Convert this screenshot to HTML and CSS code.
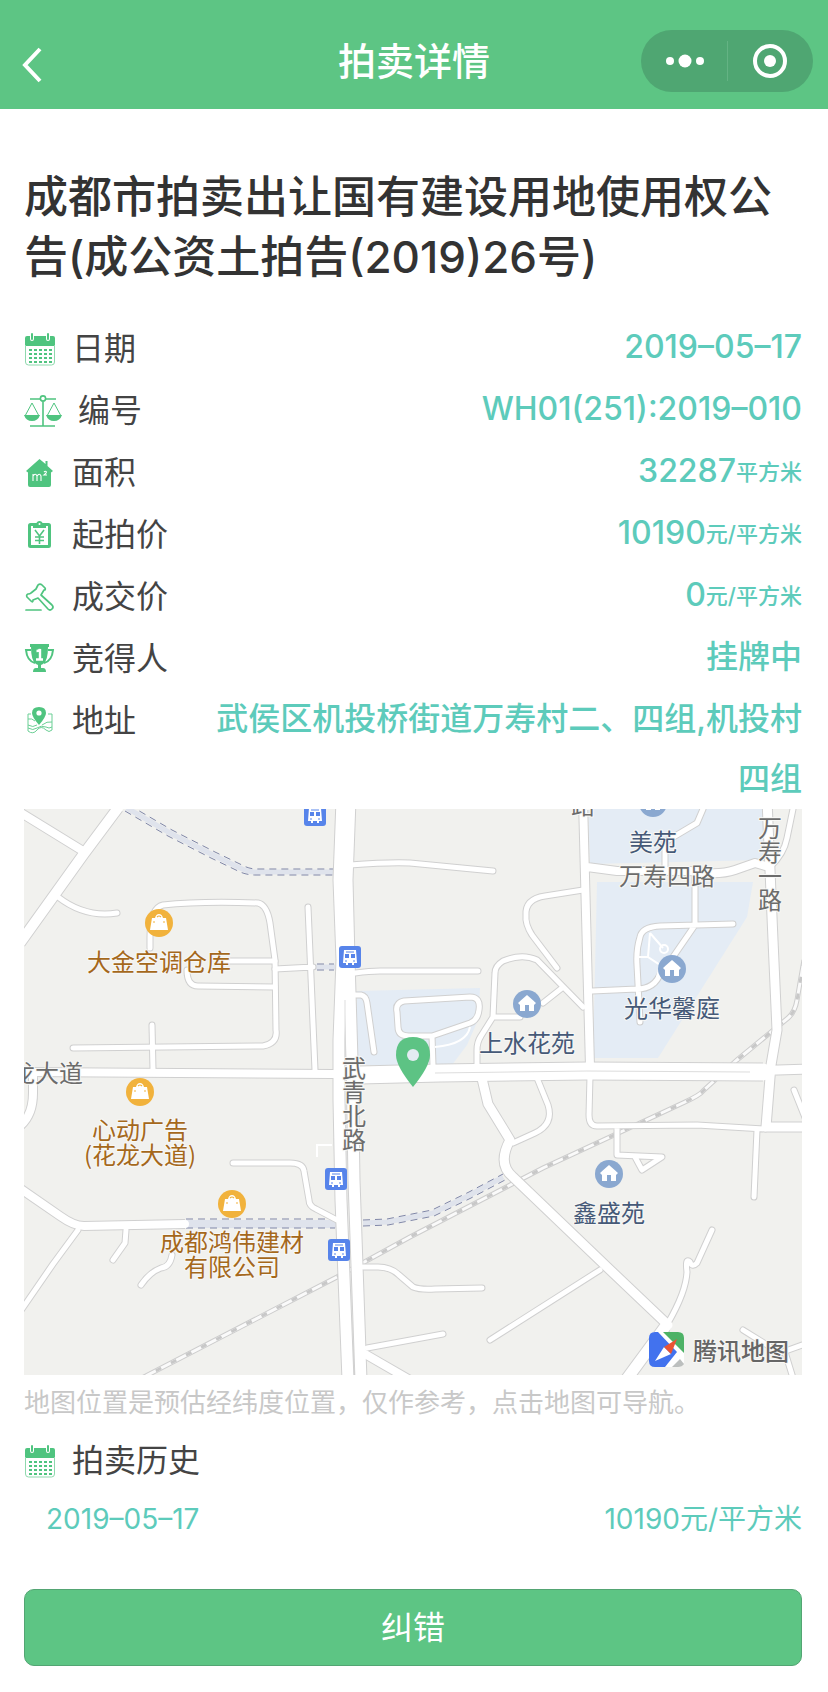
FILE: index.html
```html
<!DOCTYPE html>
<html lang="zh-CN">
<head>
<meta charset="utf-8">
<meta name="viewport" content="width=device-width, initial-scale=1">
<title>拍卖详情</title>
<link rel="stylesheet" href="styles.css">
</head>
<body>
<svg class="defs" aria-hidden="true">
  <defs>
    <symbol id="calendar" viewBox="0 0 32 34">
      <path fill="#4fc47f" d="M1 14V6q0-2 2-2h3v3q0 2 2 2t2-2V4h12v3q0 2 2 2t2-2V4h3q2 0 2 2v8z"/>
      <path fill="none" stroke="#4fc47f" stroke-width="2" stroke-linecap="round" d="M8 2v5M24 2v5"/>
      <path fill="none" stroke="#8fd9ae" d="M1.500 13v17q0 3 3 3h23q3 0 3-3V13"/>
      <path fill="none" stroke="#4fc47f" stroke-width="2" stroke-dasharray="3 2" d="M5 18h23M5 22h23M5 26h23M5 30h23"/>
    </symbol>
    <symbol id="scales" viewBox="0 0 38 34">
      <g fill="none" stroke="#4fc47f" stroke-width="1.600">
        <path d="M6 5h10M22 5h10M19 8v24M6 32h25"/>
        <circle cx="19" cy="4.500" r="2.600"/>
        <path stroke-width="1" d="M1 22 8 9l7 13M23 22l7-13 7 13"/>
      </g>
      <path fill="#4fc47f" d="M0 21h16q-2 6-8 6t-8-6zM22 21h16q-2 6-8 6t-8-6z"/>
    </symbol>
    <symbol id="house" viewBox="0 0 32 32">
      <path fill="#4fc47f" d="M2 14 15.500 2l6 5V4h2v5l5.500 5-2 1.500V28q0 2-2 2H6q-2 0-2-2V15.500z"/>
      <path fill="none" stroke="#fff" stroke-width="1.100" d="M9 24v-7M9 19q2.500-3.500 4 0v5M13 19q2.500-3.500 4 0v5M20 15q1.500-1.500 2.500 0 0 1-2.500 3h3"/>
    </symbol>
    <symbol id="clipboard" viewBox="0 0 32 32">
      <rect x="5.500" y="5.500" width="20" height="22" rx="1" fill="none" stroke="#4fc47f" stroke-width="3"/>
      <path fill="#4fc47f" d="M9 5h3q1-3 3.500-3T19 5h3v4H9z"/>
      <circle cx="15.500" cy="5" r="1" fill="#fff"/>
      <path fill="none" stroke="#4fc47f" stroke-width="1.600" d="m11 11 4.500 6 4.500-6M15.500 17v8M11 18h9M11 21.500h9"/>
    </symbol>
    <symbol id="gavel" viewBox="0 0 32 32">
      <path fill="none" stroke="#4fc47f" stroke-width="1.700" stroke-linejoin="round" stroke-linecap="round" d="M14 4q2-2 4 0l3 3q1 2-1 2l-3 5 11 10q2 2 0 4t-4 0L14 17l-5 2q0 3-2 1l-4-4q-1-2 1-3 2 0 3-1l5-4q1-2 2-4zM2 29h15"/>
    </symbol>
    <symbol id="trophy" viewBox="0 0 32 32">
      <path fill="#4fc47f" d="M6 1h19v3h-1q0 14-5 17l-2 1v3h2q3 0 3 4H9q0-4 3-4h2v-3l-2-1Q7 18 7 4H6z"/>
      <path fill="none" stroke="#4fc47f" stroke-width="2" d="M7 7H2q1 11 9 13M24 7h5q-1 11-9 13"/>
      <path fill="none" stroke="#fff" stroke-width="2.400" d="M12.500 8q3 0 3.500-2v10M12 16.500h7"/>
    </symbol>
    <symbol id="address" viewBox="0 0 32 32">
      <path fill="#4fc47f" d="M15 20Q8 12 8 8q0-6 7-6t7 6q0 4-7 12z"/>
      <circle cx="15" cy="8" r="2.600" fill="#fff"/>
      <path fill="none" stroke="#6bcf95" stroke-width="1" d="M7 9H4v17q5 4 9-1t9 0q3 3 6 0V9h-4M4 14q4-1 7 2M4 20q5 3 9 0M18 20q5-4 10-3M4 23q5 3 9 0t9-1q3 2 6 0"/>
    </symbol>
  </defs>
</svg>

<header class="navbar">
  <button class="back" type="button" aria-label="返回">
    <svg viewBox="0 0 24 40"><path d="M21 4 6 20l15 16"/></svg>
  </button>
  <div class="navbar-title">拍卖详情</div>
  <div class="capsule">
    <button type="button" aria-label="更多">
      <svg viewBox="0 0 40 40"><circle cx="6" cy="20" r="4"/><circle cx="21" cy="20" r="6.500"/><circle cx="36" cy="20" r="4"/></svg>
    </button>
    <button type="button" aria-label="关闭">
      <svg viewBox="0 0 40 40"><circle cx="20" cy="20" r="6"/><circle class="ring" cx="20" cy="20" r="15"/></svg>
    </button>
  </div>
</header>

<main class="page">
  <h1 class="title">成都市拍卖出让国有建设用地使用权公告(成公资土拍告(2019)26号)</h1>

  <dl class="facts">
    <div class="fact"><dt><svg class="icon icon-tall"><use href="#calendar"/></svg>日期</dt><dd>2019–05–17</dd></div>
    <div class="fact"><dt><svg class="icon icon-wide"><use href="#scales"/></svg>编号</dt><dd>WH01(251):2019–010</dd></div>
    <div class="fact"><dt><svg class="icon"><use href="#house"/></svg>面积</dt><dd>32287<small>平方米</small></dd></div>
    <div class="fact"><dt><svg class="icon"><use href="#clipboard"/></svg>起拍价</dt><dd>10190<small>元/平方米</small></dd></div>
    <div class="fact"><dt><svg class="icon"><use href="#gavel"/></svg>成交价</dt><dd>0<small>元/平方米</small></dd></div>
    <div class="fact"><dt><svg class="icon"><use href="#trophy"/></svg>竞得人</dt><dd>挂牌中</dd></div>
    <div class="fact"><dt><svg class="icon"><use href="#address"/></svg>地址</dt><dd>武侯区机投桥街道万寿村二、四组,机投村四组</dd></div>
  </dl>

  <a class="map" href="#map" id="map" aria-label="地图导航">
    <svg viewBox="24 809 778 566">
      <defs>
        <g id="small-roads">
          <path d="M58 897Q85 918 117 913"/>
          <path d="M150 948V937Q150 908 163 905 200 901 258 903 267 905 270 923L275 960 276 1030Q278 1043 263 1046L73 1048"/>
          <path d="M225 961H275M187 970Q187 986 198 986L275 987M275 969 313 967M308 907 315 1070M152 1025 153 1070"/>
          <path d="M350 865Q390 862 410 863L493 871M355 973Q370 971 380 971H478"/>
          <path d="M355 995H361Q366 996 367 1003L374 1052"/>
          <path d="M398 1027Q398 1036 409 1036H432L470 1023Q478 1020 479 1010 481 997 470 997L404 1001Q395 1003 397 1012ZM432 1036 433 1065"/>
          <path d="M477 1065V1050Q477 1042 481 1036L493 1017 495 973Q495 966 503 961 522 953 537 960L583 1007M493 1017H520M543 1003 562 988"/>
          <path d="M583 890 545 896Q525 899 526 915 525 924 532 935L557 968"/>
          <path d="M703 809 697 823 665 842V870M695 878V925M733 924 660 926Q642 927 640 937 636 950 637 965L640 1022M695 925 673 957M592 991 637 989Q655 989 661 972"/>
          <path d="M793 809 787 838Q784 854 770 867"/>
          <path d="M590 1076 589 1115Q589 1126 597 1126L697 1125 765 1129M617 1127V1155L662 1157 642 1170 635 1157M757 1130 754 1197"/>
          <path d="M535 1073 548 1105Q554 1124 535 1133L513 1143"/>
          <path d="M794 1090 810 1130"/>
          <path d="M712 1230 697 1263Q692 1268 690 1262 685 1257 687 1272 686 1292 668 1323M600 1270 490 1340M743 1330 780 1353 802 1345M785 1352 793 1378"/>
          <path d="M363 1267H378Q391 1267 399 1275L413 1287Q420 1290 435 1289L482 1288M367 1348 443 1334"/>
          <path d="M78 1230 53 1264 20 1312M126 1230 125 1243 113 1260M172 1255Q170 1267 161 1268 150 1272 141 1285"/>
          <path d="M233 1163H290Q303 1163 304 1171L309 1200Q309 1206 316 1209L337 1220"/>
        </g>
        <g id="big-roads">
          <path d="M18 811 83 851M33 1072V1093Q33 1115 20 1126M18 1187 60 1216Q74 1226 84 1226L185 1224"/>
          <path d="M118 808 83 855 20 943" stroke-width="10"/>
          <path d="M20 1072 333 1074"/>
          <path d="M583 800 590 1067M587 867 617 871H690Q718 876 735 870L755 863 769 867"/>
          <path d="M767 800 773 940 777 1030 771 1065 766 1127H808" stroke-width="9"/>
          <path d="M480 1070 488 1104 510 1140Q497 1164 513 1177L607 1267 668 1325" stroke-width="9"/>
          <path d="M626 1380 665 1327" stroke-width="11"/>
          <path d="M365 1354 410 1380"/>
          <path d="M360 1075 440 1073 587 1071 763 1072" stroke-width="17"/>
          <path d="M750 1071 810 1069" stroke-width="9"/>
          <path d="M350 800 347 880 349 960 352 1060 354 1180 361 1380" stroke-width="11"/>
          <path d="M342 800 339 880 342 960 339 1040 339 1100 341 1200 348 1380" stroke-width="11"/>
        </g>
        <g id="poi-shop">
          <circle r="14" fill="#f1b23c"/>
          <path fill="#fff" d="M-7-5h3Q-3-9 0-9t4 4h3L9 7H-9z"/>
          <path fill="none" stroke="#f1b23c" stroke-width="1.200" d="M-2-6Q0-8 2-6M-6-1h2M4-1h2"/>
        </g>
        <g id="poi-home">
          <circle r="14" fill="#8aa8d0"/>
          <path fill="#fff" d="M-9-1Q-8-2 0-9 8-2 9-1L7 1v6H2V1h-4v6h-5V1z"/>
        </g>
        <g id="poi-bus">
          <rect x="-11" y="-11" width="22" height="22" rx="3" fill="#5784ea"/>
          <path fill="#fff" d="M-6-7H6l1 13H4v2H2V6h-4v2h-2V6h-3z"/>
          <path fill="none" stroke="#5784ea" stroke-width="4" d="M-5-1h4M1-1h4"/>
          <path fill="none" stroke="#5784ea" stroke-width="1" d="M-4-5h8M-5 4h2M3 4h2"/>
        </g>
      </defs>

      <rect x="24" y="809" width="778" height="566" fill="#f1f1ee"/>
      <path class="estate" d="M357 991 480 988 478 1020 467 1045 452 1065H357zM588 805H763V860L590 864zM597 882H753L747 917 658 1058H593z"/>

      <g class="tunnel">
        <path d="M127 808 170 833 213 855 240 868Q248 872 256 872H333"/>
        <path d="M315 967H335M363 1223 387 1222 433 1213 470 1195 503 1177"/>
        <path class="tunnel-wide" d="M185 1224H337"/>
      </g>
      <g class="tunnel-edge">
        <path d="M129 805 172 830 215 852 242 865Q249 869 257 869H333M125 811 168 836 211 858 238 871Q246 875 255 875H333"/>
        <path d="M317 964H334M317 970H334M186 1219H335M186 1228H335"/>
        <path d="M363 1220 387 1219 432 1210 469 1192 503 1174M363 1226 388 1225 434 1216 471 1198 505 1180"/>
      </g>

      <path class="rail-edge" d="M804 960 797 1000Q795 1012 788 1018L737 1060 703 1091Q700 1095 685 1102L640 1123 543 1168 410 1237 337 1277 140 1379"/>
      <path class="rail-base" d="M804 960 797 1000Q795 1012 788 1018L737 1060 703 1091Q700 1095 685 1102L640 1123 543 1168 410 1237 337 1277 140 1379"/>
      <path class="rail-dash" d="M804 960 797 1000Q795 1012 788 1018L737 1060 703 1091Q700 1095 685 1102L640 1123 543 1168 410 1237 337 1277 140 1379"/>

      <g class="casing">
        <use href="#small-roads"/>
        <g class="wide-casing">
          <path d="M18 811 83 851M33 1072V1093Q33 1115 20 1126M18 1187 60 1216Q74 1226 84 1226L185 1224M20 1072 333 1074M583 800 590 1067M587 867 617 871H690Q718 876 735 870L755 863 769 867M365 1354 410 1380"/>
          <path stroke-width="12" d="M118 808 83 855 20 943"/>
          <path stroke-width="11" d="M767 800 773 940 777 1030 771 1065 766 1127H808M480 1070 488 1104 510 1140Q497 1164 513 1177L607 1267 668 1325M750 1071 810 1069"/>
          <path stroke-width="13" d="M626 1380 665 1327M350 800 347 880 349 960 352 1060 354 1180 361 1380M342 800 339 880 342 960 339 1040 339 1100 341 1200 348 1380"/>
          <path stroke-width="19" d="M360 1075 440 1073 587 1071 763 1072"/>
        </g>
      </g>
      <g class="surface">
        <use href="#small-roads"/>
        <g class="wide-surface"><use href="#big-roads"/></g>
      </g>
      <path class="footpath" d="M650 933 648 957 660 965 655 985M637 957H648M650 933 663 948M470 1027Q467 1044 435 1047M317 1157V1145H332"/>
      <circle class="footpath" cx="664" cy="949" r="4"/>
      <path class="divider" d="M345 1000 345 1080 347 1180M435 1073 587 1071 750 1072"/>

      <use href="#poi-shop" x="159" y="923"/>
      <use href="#poi-shop" x="140" y="1092"/>
      <use href="#poi-shop" x="232" y="1204"/>
      <use href="#poi-home" x="653" y="803"/>
      <use href="#poi-home" x="672" y="969"/>
      <use href="#poi-home" x="527" y="1004"/>
      <use href="#poi-home" x="609" y="1174"/>
      <use href="#poi-bus" x="315" y="815"/>
      <use href="#poi-bus" x="350" y="957"/>
      <use href="#poi-bus" x="336" y="1179"/>
      <use href="#poi-bus" x="339" y="1250"/>

      <g class="label label-shop">
        <text x="159" y="971">大金空调仓库</text>
        <text x="140" y="1139">心动广告</text>
        <text x="140" y="1164">(花龙大道)</text>
        <text x="232" y="1251">成都鸿伟建材</text>
        <text x="232" y="1276">有限公司</text>
      </g>
      <g class="label label-home">
        <text x="653" y="851">美苑</text>
        <text x="672" y="1017">光华馨庭</text>
        <text x="527" y="1052">上水花苑</text>
        <text x="609" y="1222">鑫盛苑</text>
      </g>
      <g class="label label-road">
        <text x="47" y="1082">龙大道</text>
        <text x="583" y="814">路</text>
        <text x="667" y="885">万寿四路</text>
        <text class="label-vertical" x="354" y="1104">武青北路</text>
        <text class="label-vertical" x="770" y="864">万寿一路</text>
      </g>

      <path fill="#5dc384" d="M413 1087Q396 1066 396 1055 396 1037 413 1037T430 1055Q430 1066 413 1087z"/>
      <circle cx="413" cy="1055" r="6" fill="#e4ebf2"/>

      <g transform="translate(649 1332)">
        <rect width="35" height="35" rx="6" fill="#fff"/>
        <path fill="#4272ee" d="M6 0h3l19 20-12 15H6q-6 0-6-6V6q0-6 6-6z"/>
        <path fill="#4db266" d="M14 0h15q6 0 6 6v15z"/>
        <path fill="#bcbfbe" d="M23 35 31 27l4 5q-2 3-6 3z"/>
        <path fill="#fff" d="M6 29 15 15l7 7z"/>
        <path fill="#ea5433" d="M28 7 15 15l7 7z"/>
      </g>
      <text class="label brand" x="741" y="1360">腾讯地图</text>
    </svg>
  </a>
  <p class="map-note">地图位置是预估经纬度位置，仅作参考，点击地图可导航。</p>

  <section class="history">
    <h2 class="history-title"><svg class="icon icon-tall"><use href="#calendar"/></svg>拍卖历史</h2>
    <ul class="history-list">
      <li><time datetime="2019-05-17">2019–05–17</time><span>10190元/平方米</span></li>
    </ul>
  </section>

  <button class="report" type="button">纠错</button>
</main>
</body>
</html>
```

FILE: styles.css
```css
* {
  box-sizing: border-box;
}

body {
  margin: 0;
  background: #fff;
  color: #444;
  font-family: Inter, "Noto Sans CJK SC", sans-serif;
  font-size: 32px;
}

button {
  padding: 0;
  border: 0;
  background: none;
  color: inherit;
  font: inherit;
}

.defs {
  position: absolute;
  width: 0;
  height: 0;
}

/* Navigation bar */
.navbar {
  display: grid;
  grid-template-columns: 1fr auto 1fr;
  align-items: center;
  height: 109px;
  padding: 12px 15px 0;
  background: #5dc584;
  color: #fff;
}

.navbar-title {
  font-size: 38px;
  font-weight: 500;
  line-height: 60px;
}

.back {
  width: 32px;
  height: 40px;
  margin-top: 8px;
  padding-left: 4px;
}

.back svg {
  display: block;
  width: 24px;
  height: 40px;
  fill: none;
  stroke: #fff;
  stroke-width: 4;
}

.capsule {
  display: flex;
  align-items: center;
  justify-self: end;
  width: 172px;
  height: 62px;
  border-radius: 31px;
  background: #4fa672;
}

.capsule button {
  display: flex;
  flex: 1;
  justify-content: center;
}

.capsule button + button {
  border-left: 1px solid #64b384;
}

.capsule svg {
  width: 40px;
  height: 40px;
  fill: #fff;
}

.capsule .ring {
  fill: none;
  stroke: #fff;
  stroke-width: 4;
}

/* Content */
.page {
  padding: 58px 26px 27px 24px;
}

.title {
  margin: 0 0 30px;
  color: #333;
  font-size: 44px;
  font-weight: 500;
  line-height: 60px;
}

.facts {
  margin: 0;
}

.fact {
  display: flex;
  justify-content: space-between;
  gap: 64px;
  line-height: 60px;
}

.fact:not(:last-child) {
  padding-bottom: 2px;
}

.fact dt {
  display: flex;
  flex: none;
  align-items: center;
  gap: 16px;
  height: 60px;
  padding-top: 4px;
}

.fact dd {
  margin: 0;
  color: #5dcbbb;
  font-weight: 500;
  text-align: right;
}

.fact small {
  font-size: 22px;
  line-height: 1;
  vertical-align: 2px;
}

.icon {
  flex: none;
  width: 32px;
  height: 32px;
}

.icon-tall {
  height: 34px;
}

.icon-wide {
  width: 38px;
  height: 34px;
}

/* Map */
.map {
  display: block;
  overflow: hidden;
}

.map svg {
  display: block;
  width: 100%;
}

.estate {
  fill: #e4ecf5;
}

.tunnel,
.tunnel-edge,
.casing,
.surface,
.footpath,
.divider,
.rail-edge,
.rail-base,
.rail-dash {
  fill: none;
}

.tunnel {
  stroke: #dfe3ec;
  stroke-width: 5;
}

.tunnel-wide {
  stroke-width: 8;
}

.tunnel-edge {
  stroke: #8087a8;
  stroke-width: 1;
  stroke-dasharray: 7 5;
}

.rail-edge {
  stroke: #cdcdcd;
  stroke-width: 5;
}

.rail-base {
  stroke: #fafafa;
  stroke-width: 3;
}

.rail-dash {
  stroke: #c8c8c8;
  stroke-width: 3;
  stroke-dasharray: 6 11;
}

.footpath {
  stroke: #fff;
  stroke-width: 2;
}

.casing {
  stroke: #d0d0d0;
  stroke-width: 7;
  stroke-linecap: round;
  stroke-linejoin: round;
}

.wide-casing {
  stroke-width: 10;
  stroke-linecap: butt;
}

.surface {
  stroke: #fff;
  stroke-width: 5;
  stroke-linecap: round;
  stroke-linejoin: round;
}

.wide-surface {
  stroke-width: 8;
}

.divider {
  stroke: #ddd;
  stroke-width: 1;
}

.label {
  font-family: "Noto Sans CJK SC", sans-serif;
  font-size: 24px;
  text-anchor: middle;
  stroke: #f8f8f6;
  stroke-width: 2;
  stroke-linejoin: round;
  paint-order: stroke;
}

.label-vertical {
  writing-mode: vertical-rl;
}

.label-shop {
  fill: #a5681c;
}

.label-home {
  fill: #465a78;
}

.label-road {
  fill: #6c6c6c;
}

.brand {
  fill: #666;
  font-weight: 500;
}

.map-note {
  margin: 8px 0 0;
  color: #c8c8c8;
  font-size: 26px;
  line-height: 40px;
}

/* History */
.history-title {
  display: flex;
  align-items: center;
  gap: 16px;
  margin: 8px 0 0;
  font-size: 32px;
  font-weight: 400;
  line-height: 60px;
}

.history-list {
  margin: 0;
  padding: 0 0 0 22px;
  list-style: none;
  color: #5dcbbb;
  font-size: 28px;
  line-height: 56px;
}

.history-list li {
  display: flex;
  justify-content: space-between;
}

/* Action */
.report {
  display: block;
  width: 100%;
  height: 77px;
  margin-top: 42px;
  padding-bottom: 6px;
  border: 1px solid #53a573;
  border-radius: 10px;
  background: #5dc584;
  color: #fff;
  font-size: 32px;
}
```
